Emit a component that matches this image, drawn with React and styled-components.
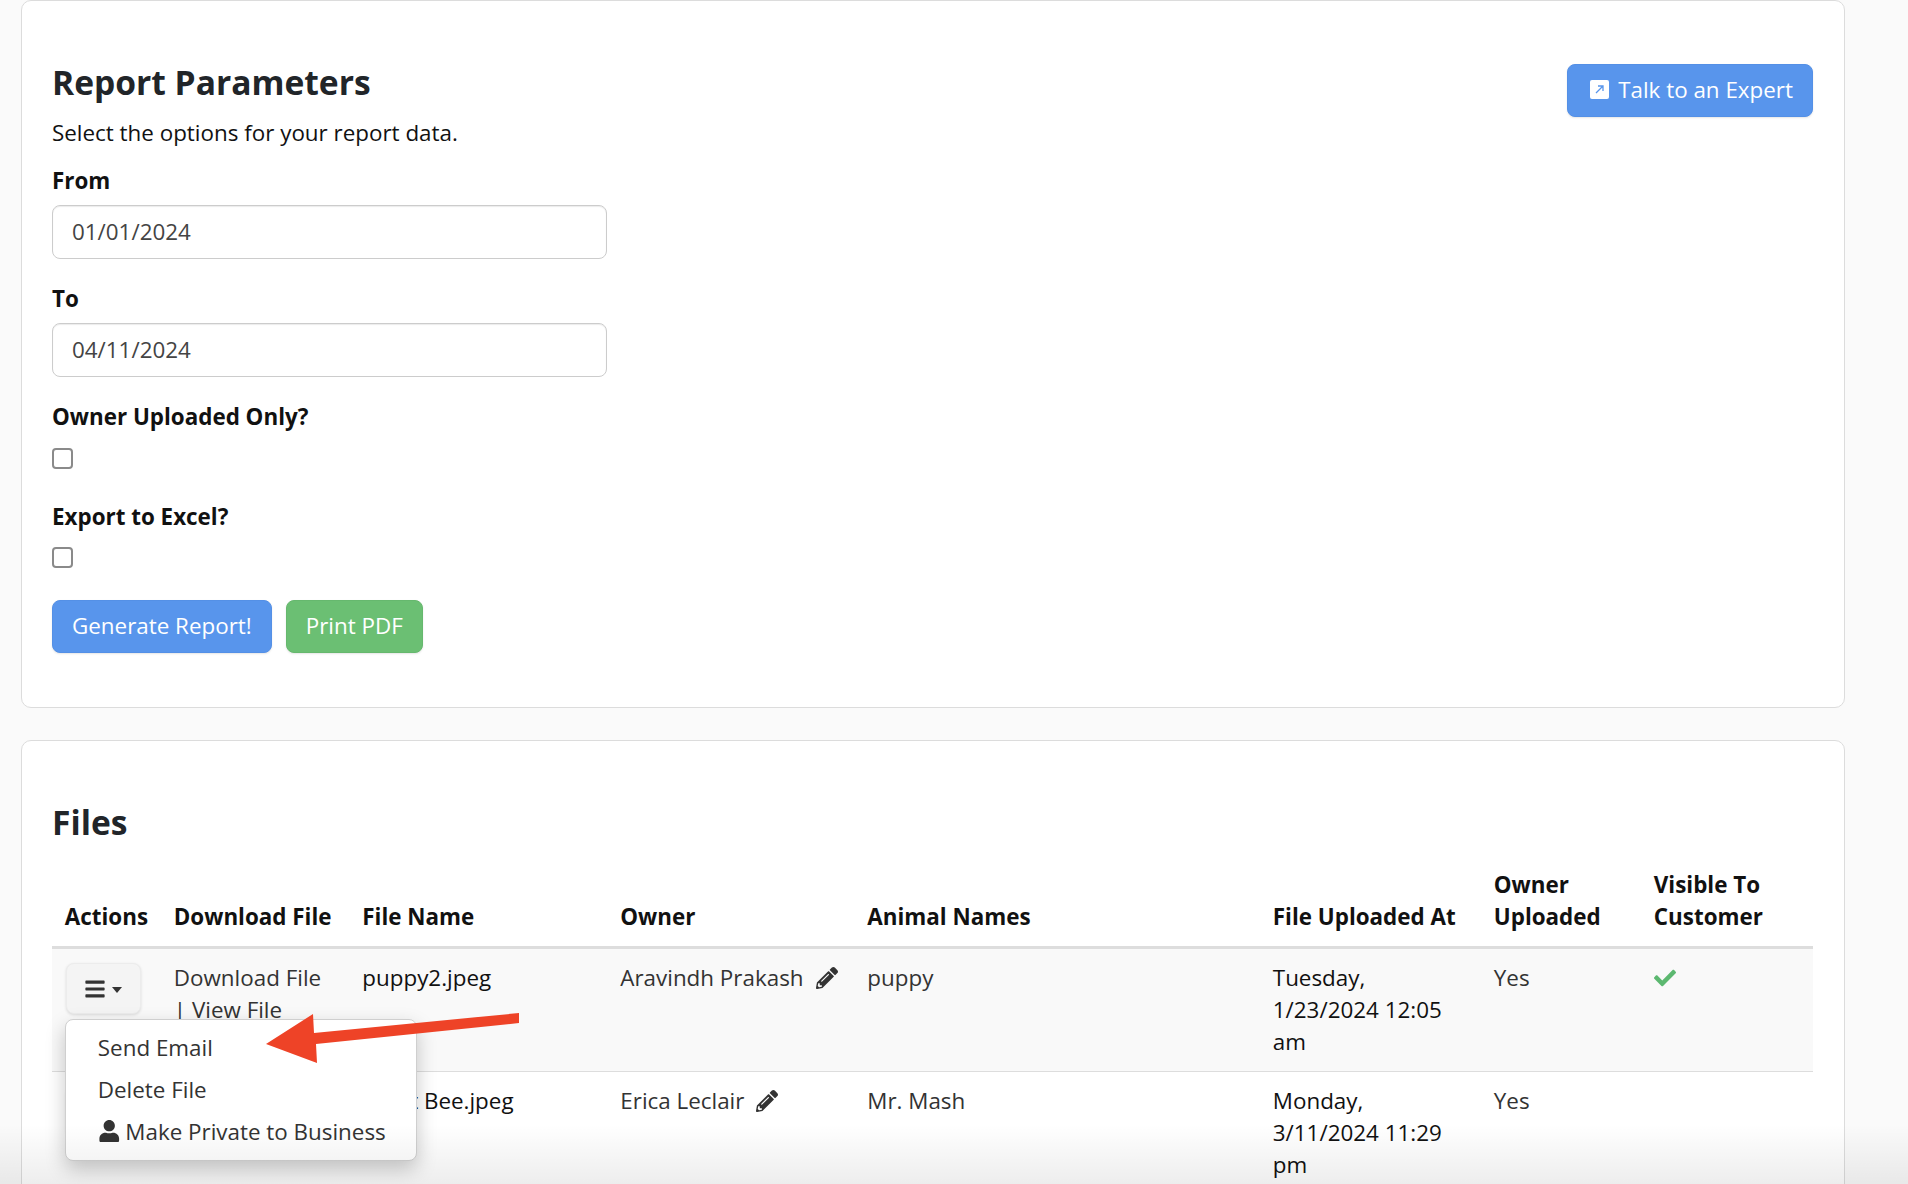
import React from "react";
import styled, { createGlobalStyle } from "styled-components";
import { FaBars, FaCheck, FaPencilAlt, FaUser } from "react-icons/fa";

const GlobalStyle = createGlobalStyle`
  html, body {
    margin: 0;
    padding: 0;
    height: 1184px;
    overflow: hidden;
    background: #fafafa;
  }
  body {
    font-family: "Open Sans", "Noto Sans", sans-serif;
    font-size: 22.4px;
    line-height: 32px;
    color: #212529;
  }
`;

const Page = styled.div`
  position: relative;
  height: 1184px;
  overflow: hidden;
  padding-left: 21px;
  box-sizing: border-box;
`;
const Card = styled.section`
  position: relative;
  width: 1824px;
  box-sizing: border-box;
  background: #fff;
  border: 1px solid #dcdcdc;
  border-radius: 10px;
  padding: 63px 31px 54px 30px;
  & + & {
    margin-top: 32px;
  }
`;
const CardHeader = styled.div`
  display: flex;
  justify-content: space-between;
  align-items: flex-start;
`;
const Title = styled.h3`
  margin: 0 0 17px;
  font-size: 33.6px;
  line-height: 36.4px;
  font-weight: 700;
  color: #212529;
`;
const Lead = styled.p`
  margin: 0 0 16px;
  color: #111;
`;
const Field = styled.div`
  margin-bottom: ${({ $gap }) => $gap || 24}px;
`;
const Label = styled.label`
  display: block;
  font-weight: 700;
  color: #111;
  margin-bottom: ${({ $gap }) => $gap || 8}px;
`;
const Input = styled.input`
  display: block;
  width: 555px;
  height: 54px;
  box-sizing: border-box;
  padding: 0 19px 2px;
  font: inherit;
  color: #444;
  background: #fff;
  border: 1px solid #ccc;
  border-radius: 8px;
  box-shadow: inset 0 1px 1px rgba(0, 0, 0, 0.08);
  outline: none;
`;
const Check = styled.span`
  display: block;
  width: 21px;
  height: 21px;
  box-sizing: border-box;
  border: 2px solid #8a8a8a;
  border-radius: 4px;
  background: #fff;
`;
const Buttons = styled.div`
  display: flex;
  gap: 14px;
`;
const Button = styled.button`
  display: inline-flex;
  align-items: center;
  gap: 9px;
  height: 53px;
  box-sizing: border-box;
  padding: 0 19px 2px ${({ $wide }) => ($wide ? 22 : 19)}px;
  font: inherit;
  color: #fff;
  white-space: nowrap;
  background: ${({ $green }) => ($green ? "#6bbf73" : "#5895ec")};
  border: 1px solid ${({ $green }) => ($green ? "#66b86e" : "#5490e6")};
  border-radius: 8px;
  box-shadow: 0 1px 2px rgba(0, 0, 0, 0.1);
`;

const Table = styled.table`
  width: 1761px;
  table-layout: fixed;
  border-collapse: separate;
  border-spacing: 0;
  margin-top: -1px;
`;
const Th = styled.th`
  width: ${({ $w }) => $w}px;
  box-sizing: border-box;
  padding: 11.8px 12.8px 13.8px;
  text-align: left;
  vertical-align: bottom;
  font-weight: 700;
  color: #111;
  border-bottom: 3px solid #ddd;
`;
const Row = styled.tr`
  background: ${({ $striped }) => ($striped ? "#f9f9f9" : "#fff")};
`;
const Td = styled.td`
  padding: 12.8px;
  vertical-align: top;
  color: ${({ $soft }) => ($soft ? "#333" : "#111")};
  border-bottom: 1px solid #ddd;
`;
const ActionCell = styled.div`
  position: relative;
  margin-left: 1px;
`;
const MenuButton = styled.button`
  display: flex;
  align-items: center;
  justify-content: center;
  gap: 6px;
  width: 75px;
  height: 51px;
  margin-top: 1px;
  padding: 0;
  color: #333;
  background: #f4f4f4;
  border: 1px solid #ececec;
  border-radius: 8px;
  box-shadow: 0 1px 3px rgba(0, 0, 0, 0.12);
`;
const Caret = styled.span`
  width: 0;
  height: 0;
  margin-top: 3px;
  border-left: 5.5px solid transparent;
  border-right: 5.5px solid transparent;
  border-top: 6px solid #333;
`;
const Menu = styled.ul`
  position: absolute;
  top: 56px;
  left: -1px;
  z-index: 2;
  width: 352px;
  height: 142px;
  box-sizing: border-box;
  margin: 0;
  padding: 7px 0;
  list-style: none;
  background: #fff;
  border: 1px solid #cfcfcf;
  border-radius: 8px;
  box-shadow: 0 8px 20px rgba(0, 0, 0, 0.22);
`;
const MenuItem = styled.li`
  display: flex;
  align-items: center;
  gap: 5px;
  height: 42px;
  padding-left: 32px;
  color: #333;
  white-space: nowrap;
`;
const UserIcon = styled(FaUser)`
  font-size: 22.5px;
  margin-top: -2px;
`;
const FileLink = styled.span`
  display: block;
`;
const Pencil = styled(FaPencilAlt)`
  margin-left: 12px;
  font-size: 22px;
  vertical-align: -3px;
  color: #333;
`;
const GreenCheck = styled(FaCheck)`
  font-size: 22px;
  color: #5cb870;
  vertical-align: -3px;
`;
const Arrow = styled.svg`
  position: absolute;
  top: 1000px;
  left: 255px;
  z-index: 3;
`;
const BottomFade = styled.div`
  position: absolute;
  left: 0;
  right: 0;
  bottom: 0;
  height: 60px;
  z-index: 4;
  pointer-events: none;
  background: linear-gradient(to bottom, rgba(0, 0, 0, 0), rgba(0, 0, 0, 0.07));
`;

const ExternalIcon = () => (
  <svg width="19" height="19" viewBox="0 0 19 19">
    <rect width="19" height="19" rx="2" fill="#fff" />
    <path d="M6 13l6.5-6.5M8 6h5v5" fill="none" stroke="#5895ec" strokeWidth="1.3" />
  </svg>
);

const columns = [
  { w: 109, label: "Actions" },
  { w: 188.5, label: "Download File" },
  { w: 258, label: "File Name" },
  { w: 247, label: "Owner" },
  { w: 405.5, label: "Animal Names" },
  { w: 221, label: "File Uploaded At" },
  { w: 160, label: "Owner Uploaded" },
  { w: 172, label: "Visible To Customer" },
];

const rows = [
  {
    file: "puppy2.jpeg",
    owner: "Aravindh Prakash",
    animal: "puppy",
    uploaded: "Tuesday, 1/23/2024 12:05 am",
    visible: true,
    open: true,
  },
  {
    file: "Wont Bee.jpeg",
    owner: "Erica Leclair",
    animal: "Mr. Mash",
    uploaded: "Monday, 3/11/2024 11:29 pm",
  },
];

const FileRow = ({ row, striped }) => (
  <Row $striped={striped}>
    <Td>
      <ActionCell>
        <MenuButton>
          <FaBars size={22} />
          <Caret />
        </MenuButton>
        {row.open && (
          <Menu>
            <MenuItem>Send Email</MenuItem>
            <MenuItem>Delete File</MenuItem>
            <MenuItem>
              <UserIcon />
              Make Private to Business
            </MenuItem>
          </Menu>
        )}
      </ActionCell>
    </Td>
    <Td $soft>
      <FileLink>Download File</FileLink>
      <FileLink>| View File</FileLink>
    </Td>
    <Td>{row.file}</Td>
    <Td $soft>
      {row.owner}
      <Pencil />
    </Td>
    <Td $soft>{row.animal}</Td>
    <Td>{row.uploaded}</Td>
    <Td $soft>Yes</Td>
    <Td>{row.visible && <GreenCheck />}</Td>
  </Row>
);

export default function App() {
  return (
    <Page>
      <GlobalStyle />
      <Card>
        <CardHeader>
          <div>
            <Title>Report Parameters</Title>
            <Lead>Select the options for your report data.</Lead>
          </div>
          <Button $wide>
            <ExternalIcon />
            Talk to an Expert
          </Button>
        </CardHeader>
        <Field>
          <Label>From</Label>
          <Input defaultValue="01/01/2024" />
        </Field>
        <Field>
          <Label>To</Label>
          <Input defaultValue="04/11/2024" />
        </Field>
        <Field $gap={32}>
          <Label $gap={15}>Owner Uploaded Only?</Label>
          <Check />
        </Field>
        <Field $gap={32}>
          <Label $gap={14}>Export to Excel?</Label>
          <Check />
        </Field>
        <Buttons>
          <Button>Generate Report!</Button>
          <Button $green>Print PDF</Button>
        </Buttons>
      </Card>
      <Card>
        <Title>Files</Title>
        <Table>
          <thead>
            <tr>
              {columns.map((col) => (
                <Th key={col.label} $w={col.w}>
                  {col.label}
                </Th>
              ))}
            </tr>
          </thead>
          <tbody>
            {rows.map((row, i) => (
              <FileRow key={row.file} row={row} striped={i === 0} />
            ))}
          </tbody>
        </Table>
      </Card>
      <Arrow width="270" height="70" viewBox="0 0 270 70">
        <polygon points="11,44 58,14 59,33 264,13 264,23 61,44 62,63" fill="#ee4327" />
      </Arrow>
      <BottomFade />
    </Page>
  );
}
